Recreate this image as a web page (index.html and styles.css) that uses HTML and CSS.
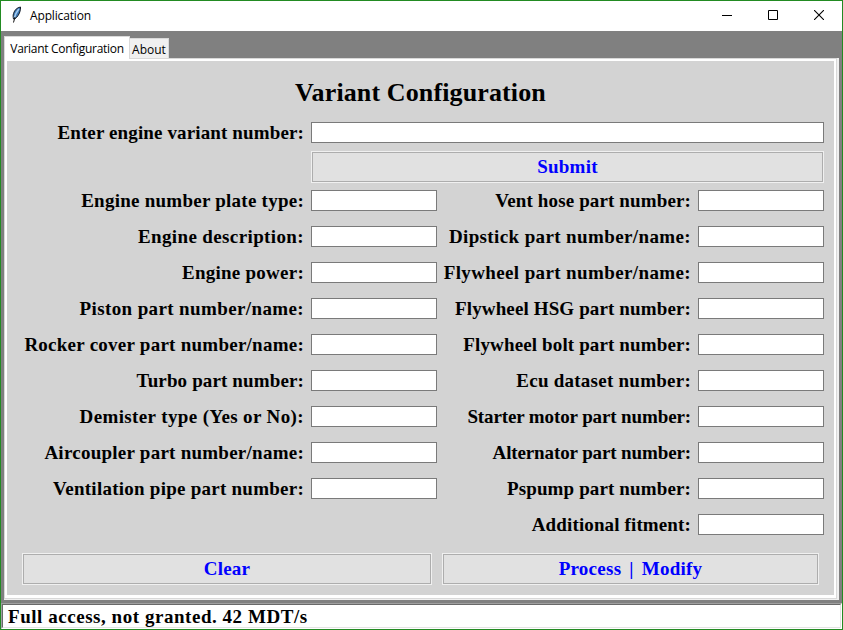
FILE: index.html
```html
<!DOCTYPE html>
<html lang="en">
<head>
<meta charset="utf-8">
<title>Application</title>
<link rel="stylesheet" href="styles.css">
</head>
<body>
<div class="window">
  <header class="titlebar">
    <svg class="feather" width="12" height="18" viewBox="0 0 12 18">
      <path d="M10.500 1C7 1.500 4.600 4 3.500 7.500c-.6 2-.4 3.800 0 5.500L5 12.800c2.200-1.600 3.800-4 4.800-6.800.6-2 .9-3.600.7-5z" fill="#3e78b4" stroke="#151d28" stroke-width="1"/>
      <path d="M8.800 3C6.800 5.500 5.200 8.500 4.400 12" fill="none" stroke="#a4ccf0" stroke-width="1.500"/>
      <path d="M5 11l-1.500 5.500" fill="none" stroke="#111" stroke-width="1"/>
    </svg>
    <span class="app-name">Application</span>
    <div class="controls">
      <svg width="10" height="10" viewBox="0 0 10 10"><path d="M0 5.500h10" stroke="#000"/></svg>
      <svg width="10" height="10" viewBox="0 0 10 10"><path d="M.5.5h9v9h-9z" fill="none" stroke="#000"/></svg>
      <svg width="10" height="10" viewBox="0 0 10 10"><path d="M0 0l10 10M10 0L0 10" fill="none" stroke="#000" stroke-width="1.100"/></svg>
    </div>
  </header>
  <main class="client">
    <nav class="tabs">
      <div class="tab active"><span class="t-variant">Variant Configuration</span></div>
      <div class="tab"><span class="t-about">About</span></div>
    </nav>
    <section class="pane">
      <div class="panel">
        <h1>Variant Configuration</h1>
        <div class="form">
          <label class="snug">Enter engine variant number:</label><input class="wide">
          <button class="wide submit">Submit</button>
          <label>Engine number plate type:</label><input><label class="snug">Vent hose part number:</label><input>
          <label class="loose">Engine description:</label><input><label class="loose">Dipstick part number/name:</label><input>
          <label>Engine power:</label><input><label class="loose">Flywheel part number/name:</label><input>
          <label class="loose">Piston part number/name:</label><input><label class="snug">Flywheel HSG part number:</label><input>
          <label>Rocker cover part number/name:</label><input><label class="snug">Flywheel bolt part number:</label><input>
          <label class="snug">Turbo part number:</label><input><label>Ecu dataset number:</label><input>
          <label class="loose">Demister type (Yes or No):</label><input><label class="tight">Starter motor part number:</label><input>
          <label>Aircoupler part number/name:</label><input><label class="tight">Alternator part number:</label><input>
          <label>Ventilation pipe part number:</label><input><label class="snug">Pspump part number:</label><input>
          <label class="last snug">Additional fitment:</label><input>
        </div>
        <div class="actions">
          <button class="clear">Clear</button>
          <button class="process">Process | Modify</button>
        </div>
      </div>
    </section>
  </main>
  <footer class="status"><div class="status-field">Full access, not granted. 42 MDT/s</div></footer>
</div>
</body>
</html>
```
FILE: styles.css
```css
* { box-sizing: border-box; }
body { margin: 0; font-family: "Liberation Serif", serif; color: #000; }
.window {
  width: 843px; height: 630px; border: 1px solid #228b22;
  display: flex; flex-direction: column; background: #808080; overflow: hidden;
}
.titlebar {
  height: 30px; flex-shrink: 0; background: #fff; display: flex; align-items: center;
  padding-left: 9px; font: 12px "Open Sans", sans-serif;
}
.feather { margin-right: 8px; margin-top: -2px; }
.app-name { letter-spacing: -0.15px; margin-top: -1px; }
.controls { margin-left: auto; display: flex; gap: 36px; padding-right: 18px; margin-top: -2px; }
.client { height: 571px; flex-shrink: 0; padding: 5px 3px 2px; display: flex; flex-direction: column; }
.tabs { display: flex; align-items: flex-end; height: 22px; flex-shrink: 0; font: 12px "Open Sans", sans-serif; }
.tab {
  height: 20px; width: 39px; background: #f0f0f0; border: 1px solid #d9d9d9;
  border-left: 0; border-bottom: 0; display: flex; align-items: center; justify-content: center;
  white-space: nowrap; padding-top: 2px;
}
.tab.active {
  height: 23px; width: 126px; background: #fff; border-left: 1px solid #d9d9d9;
  position: relative; margin-bottom: -1px; padding-top: 0;
}
.t-variant { letter-spacing: -0.3px; }
.pane {
  height: 542px; flex-shrink: 0; border: solid #f0f0f0; border-width: 0 2px 1px 0;
  display: flex;
}
.panel {
  flex: 1; background: #d3d3d3; outline: 1px solid #d9d9d9; outline-offset: -1px;
  border: solid #fff; border-width: 3px 3px 4px 3px; padding-top: 15px;
}
h1 { margin: 0; font-size: 26px; line-height: 34px; text-align: center; font-weight: 700; letter-spacing: 0.12px; }
.form {
  display: grid; grid-template-columns: 304px 126px 261px 126px; width: 817px;
  grid-template-rows: 32px 36px repeat(10, 36px); padding-top: 8px;
}
label {
  font-size: 19px; font-weight: 700; letter-spacing: 0.25px; line-height: 26px;
  text-align: right; padding-right: 7px; white-space: nowrap;
}
.loose { letter-spacing: 0.38px; }
.snug { letter-spacing: 0.13px; }
.tight { letter-spacing: -0.12px; }
input {
  width: 100%; height: 21px; border: 1px solid #7a7a7a; background: #fff;
  padding: 0 2px; margin: 4px 0 0; border-radius: 0; outline: 0;
}
.form > label { margin-top: 2px; }
.wide { grid-column: 2 / 5; }
.last { grid-column: 3; }
button {
  font: 700 19px/26px "Liberation Serif", serif; letter-spacing: 0.25px; color: #00f;
  background: #e1e1e1; border: 1px solid #f0f0f0; box-shadow: inset 0 0 0 1px #adadad;
  height: 32px; padding: 0; border-radius: 0;
}
.submit { margin-top: 1px; }
.actions { display: flex; gap: 10px; padding-left: 15px; margin-top: 7px; }
.clear { width: 410px; }
.process { width: 377px; word-spacing: 3px; }
.status {
  height: 26px; flex-shrink: 0; margin-top: 1px; background: #fff;
  border: solid; border-width: 1px 1px 1px 1px; border-color: #a0a0a0 #fff #fff #a0a0a0;
}
.status-field {
  height: 24px; border: 1px solid; border-color: #696969 #e3e3e3 #e3e3e3 #696969;
  padding-left: 5px; font-size: 19px; font-weight: 700; line-height: 23px; letter-spacing: 0.54px;
}
```
